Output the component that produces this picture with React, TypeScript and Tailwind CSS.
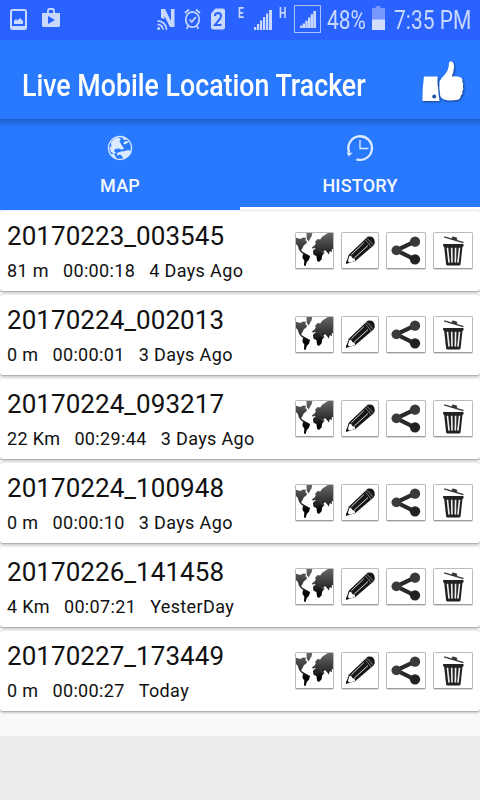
type Track = {
  name: string;
  distance: string;
  time: string;
  day: string;
};

const tracks: Track[] = [
  { name: "20170223_003545", distance: "81 m", time: "00:00:18", day: "4 Days Ago" },
  { name: "20170224_002013", distance: "0 m", time: "00:00:01", day: "3 Days Ago" },
  { name: "20170224_093217", distance: "22 Km", time: "00:29:44", day: "3 Days Ago" },
  { name: "20170224_100948", distance: "0 m", time: "00:00:10", day: "3 Days Ago" },
  { name: "20170226_141458", distance: "4 Km", time: "00:07:21", day: "YesterDay" },
  { name: "20170227_173449", distance: "0 m", time: "00:00:27", day: "Today" },
];

function SignalBars() {
  return (
    <svg width="18" height="21" viewBox="0 0 18 21" fill="#c9d8ff">
      <path d="M0 18h2.200v3H0zM3 15h2.200v6H3zM6 11.500h2.200V21H6zM9 8h2.200v13H9zM12 4.500h2.200V21H12zM15 1h3v20h-3z" />
    </svg>
  );
}

function StatusBar() {
  return (
    <div className="h-10 bg-[#2962ff] flex items-center text-[#c9d8ff]">
      <svg className="ml-2.5 -mt-0.5" width="17" height="21" viewBox="0 0 17 21">
        <rect x="1" y="1" width="15" height="19" rx="1.500" fill="none" stroke="#c9d8ff" strokeWidth="2" />
        <path d="M1 17h15v3H1zM4 15v-3l2-2 1.500 1.500L10 9l3 3v3z" fill="#c9d8ff" />
      </svg>
      <svg className="ml-[15px] -mt-1" width="18" height="20" viewBox="0 0 18 20">
        <path d="M6 5V2.500Q6 1 7.500 1h3Q12 1 12 2.500V5" fill="none" stroke="#c9d8ff" strokeWidth="1.800" />
        <path d="M0 5h18v12.500q0 1.500-1.500 1.500h-15Q0 19 0 17.500zM6 8v8l7-4z" fill="#c9d8ff" fillRule="evenodd" />
      </svg>

      {/* NFC */}
      <svg className="ml-[97px] -mt-0.5" width="18" height="23" viewBox="0 0 18 23">
        <path d="M4 10V1h4l6 12V1h3.500v18H13L7.500 8v3z" fill="#c9d8ff" />
        <g fill="none" stroke="#c9d8ff" strokeWidth="1.700">
          <path d="M0.500 12.800a9 9 0 0 1 9 9M0.500 16.300a5.500 5.500 0 0 1 5.500 5.500" />
        </g>
        <circle cx="1.700" cy="20.500" r="1.500" fill="#c9d8ff" />
      </svg>
      <svg className="ml-[9px] -mt-0.5" width="17" height="22" viewBox="0 0 17 22" fill="none" stroke="#c9d8ff" strokeWidth="1.700">
        <ellipse cx="8.500" cy="11.500" rx="6.700" ry="7.700" />
        <path d="M1 5l4-3.500M16 5l-4-3.500M4 18l-1.300 2.800M13 18l1.300 2.800M5.500 11.500l2.300 2.500 4-5" />
      </svg>
      <svg className="ml-[10px] -mt-0.5" width="14" height="22" viewBox="0 0 14 22">
        <path d="M4.500 0.500H12q2 0 2 2v17q0 2-2 2H2q-2 0-2-2v-14z" fill="#c9d8ff" />
        <path d="M4 8q0-3 3-3t3 3q0 2-2.500 4.500L4 17h6.500" fill="none" stroke="#2962ff" strokeWidth="2" />
      </svg>
      <span className="ml-[13px] -mt-3.5 w-[7px] text-[14px] leading-none font-bold">
        <span className="inline-block origin-left scale-x-[0.75]">E</span>
      </span>
      <div className="ml-[9px] -mt-0.5">
        <SignalBars />
      </div>
      <span className="ml-[7px] -mt-3.5 w-[8px] text-[14px] leading-none font-bold">
        <span className="inline-block origin-left scale-x-[0.75]">H</span>
      </span>
      <div className="ml-[7px] -mt-0.5 w-[27px] h-[28px] border border-[#a9c0ff] flex items-end justify-center pb-1">
        <svg width="16" height="17" viewBox="0 0 18 21" preserveAspectRatio="none" fill="#c9d8ff">
          <path d="M0 18h2.700v3H0zM3 15.500h2.700V21H3zM6 12h2.700v9H6zM9 8h2.700v13H9zM12 4h2.700v17H12zM15 0h3v21h-3z" />
        </svg>
      </div>
      <span className="ml-[6px] w-[40px] text-[25px] leading-none whitespace-nowrap">
        <span className="inline-block origin-left scale-x-[0.84]">48%</span>
      </span>
      <svg className="ml-[5px] -mt-1" width="13" height="24" viewBox="0 0 14 24" preserveAspectRatio="none">
        <path d="M4 0h5v2h5v12H0V2h4z" fill="#7998ff" />
        <path d="M0 13.500h14V24H0z" fill="#d3deff" />
      </svg>
      <span className="ml-[9px] w-[80px] text-[25px] leading-none whitespace-nowrap">
        <span className="inline-block origin-left scale-x-[0.84]">7:35 PM</span>
      </span>
    </div>
  );
}

function ThumbIcon() {
  return (
    <svg
      className="-mt-2 drop-shadow-[1px_1px_1px_rgba(0,0,0,0.45)]"
      width="43"
      height="42"
      viewBox="0 0 44 42"
      preserveAspectRatio="none"
    >
      <path
        d="M3 16.500h14q-.500 6 .500 12 .500 7 1.500 12.500H1.500q-.300-12 1.500-24.500z"
        fill="#fff"
      />
      <path
        d="M30.500 1.200q3.500.500 3.300 5.800-.300 5-2.300 9.500 5-.500 8.500.500 3 1 2.200 4.500 1.500 2 .600 4.500 1 2.500-.400 5 .500 3-1.600 4.500-.300 4-4.300 4.500-8 1-13-.500-3-1-3.800-3.500-1.500-8-.700-14.500 1-3 5-6.500 4.500-5 4.500-11 0-2.600 2-2.800z"
        fill="#fff"
      />
      <circle cx="13.500" cy="36.500" r="2" fill="#1f4fa0" />
    </svg>
  );
}

function GlobeIcon() {
  return (
    <svg width="26" height="26" viewBox="0 0 26 26">
      <circle cx="13" cy="13" r="11.500" fill="none" stroke="#dcebff" strokeWidth="1.300" />
      <path
        d="M4 8Q6 3.500 11 2.500l3 1.500-1.500 2L14 9l2 3 1 2-3 .500-2-1-4 .500-1 2 2 2-2 1-3-2-1.500-4 2-2zM15 2q3 0 5 2.500l-3 .500zM16 8l3-2 3 .500-1.500 1.500-3 1.500zM10 18l4-1.500 4-.500 3-1 3 1q-1 4-4.500 6.500L16 24l-1-3-2-1.500-3 1zM4 19h3l3 5q-3.500-.500-6-5z"
        fill="#dcebff"
      />
    </svg>
  );
}

function HistoryIcon() {
  return (
    <svg width="28" height="28" viewBox="0 0 28 28" fill="none" stroke="#dcebff">
      <path d="M3.200 18.500A11.800 11.800 0 1 1 10.500 25.300" strokeWidth="2.300" />
      <path d="M14 6v8.500h8.500" strokeWidth="1.300" />
      <path d="M.500 18.500l6 .300-3.700 3.700z" fill="#dcebff" stroke="none" />
    </svg>
  );
}

function Tabs() {
  return (
    <div className="h-[91px] flex bg-[#2979ff] bg-linear-to-b from-[#1d60ce] from-0% via-[#2979ff] via-10% to-[#2979ff] text-[#f4f8ff]">
      <button className="w-1/2 flex flex-col items-center pt-4">
        <GlobeIcon />
        <span className="mt-[11px] text-[18px] leading-7 font-medium tracking-[0.2px]">MAP</span>
      </button>
      <button className="w-1/2 flex flex-col items-center pt-[15px] border-b-3 border-white">
        <HistoryIcon />
        <span className="mt-[10px] text-[18px] leading-7 font-medium tracking-[0.2px]">HISTORY</span>
      </button>
    </div>
  );
}

function MapIcon() {
  return (
    <svg className="w-full h-full" viewBox="0 0 116 111" preserveAspectRatio="none">
      <defs>
        <linearGradient id="land" x1="0" y1="0" x2="0" y2="111" gradientUnits="userSpaceOnUse">
          <stop offset="0" stopColor="#666" />
          <stop offset="0.450" stopColor="#333" />
          <stop offset="0.700" stopColor="#050505" />
        </linearGradient>
      </defs>
      <g fill="url(#land)">
        <path d="M0 15l14 4 8-5 10 1-3 7 6 6-4 7-6 3-5 10-4 6 3 5 6 3 5 4-5 1-9-5-7-10-3-11-6-6z" />
        <path d="M33 0h18l-2 10-5 8-4 9-5-6-2-9z" />
        <path d="M22 66l8-1 14 8-3 11-7 8-4 13-5-2 1-15-6-10z" />
        <path d="M58 40l4-6-2-6 8-9 8 2 6-9 12-8 6-4h16v50l-4 3v8l-6-4-3 11-6-8-6-6-7 8-7-7-5-4-7 1-6-5-6 3-3-4z" />
        <path d="M53 57l7-8 14 2 9 10 7 1-8 10-2 12-8 8-6-4-2-15-9-4z" />
      </g>
    </svg>
  );
}

function PencilIcon() {
  return (
    <svg className="w-full h-full" viewBox="0 0 112 109" preserveAspectRatio="none">
      <path d="M12 96l9-28 53-51q4-6 9-6l10 1q6 3 8 10l1 9-3 7-58 50z" fill="#171717" />
      <path d="M70 20q12 8 21 24M75 15q13 9 22 23" fill="none" stroke="#bbb" strokeWidth="2" />
      <path d="M29 68l39-38M38 78l43-39" stroke="#ddd" strokeWidth="3" />
      <path d="M23 72l5-1 4 7 7 2 2 7-19 6-4-4z" fill="#fff" />
      <path d="M12 96l3-11 9 8z" fill="#111" />
    </svg>
  );
}

function ShareIcon() {
  return (
    <svg className="w-full h-full" viewBox="0 0 118 109" preserveAspectRatio="none">
      <path d="M86 27L29 54l57 28" fill="none" stroke="#2a2a2a" strokeWidth="13" />
      <circle cx="87" cy="27" r="16" fill="#3a3a3a" />
      <circle cx="29" cy="54" r="15" fill="#3a3a3a" />
      <circle cx="87" cy="82" r="16" fill="#222" />
    </svg>
  );
}

function TrashIcon() {
  return (
    <svg className="w-full h-full" viewBox="0 0 116 109" preserveAspectRatio="none">
      <path d="M31 12l59 18" stroke="#333" strokeWidth="4" />
      <path d="M54 18l3-6 12 3 1 8z" fill="#333" stroke="#333" strokeWidth="2" />
      <path d="M28 34l62 0v8l-3 1-6 55q-1 3-4 3H41q-3 0-4-3l-6-55-3-1z" fill="#222" />
      <path d="M41 46l5 46M54 46l1 46M66 46l-1 46M78 46l-5 46" stroke="#eee" strokeWidth="5" />
    </svg>
  );
}

const actionClass = "h-[37px] border border-[#bbb] border-b-[#999] rounded-[2px] bg-white shadow-[0_1px_1px_rgba(0,0,0,0.15)]";

function TrackCard({ track }: { track: Track }) {
  return (
    <div className="h-20 bg-white rounded-[3px] shadow-[0_1px_3px_rgba(0,0,0,0.45)] flex justify-between px-[7px]">
      <div className="text-[#111] whitespace-nowrap">
        <div className="mt-[9px] text-[26px] leading-8 tracking-[0.05px]">{track.name}</div>
        <div className="mt-[7px] flex gap-[14px] text-[18px] leading-6 tracking-[0.36px]">
          <span>{track.distance}</span>
          <span>{track.time}</span>
          <span>{track.day}</span>
        </div>
      </div>
      <div className="mt-[21px] flex items-start gap-[7px]">
        <button className={`w-[39px] ${actionClass}`}><MapIcon /></button>
        <button className={`w-[38px] ${actionClass}`}><PencilIcon /></button>
        <button className={`w-10 ${actionClass}`}><ShareIcon /></button>
        <button className={`w-10 ${actionClass}`}><TrashIcon /></button>
      </div>
    </div>
  );
}

export default function App() {
  return (
    <div className="w-[480px] h-[800px] overflow-hidden flex flex-col bg-[#ededed] font-['Roboto',sans-serif]">
      <StatusBar />
      <header className="h-[79px] bg-[#2979ff] flex items-center justify-between pl-[22px] pr-[16px] pt-[11px]">
        <h1 className="w-[350px] text-[32px] leading-10 font-medium text-white whitespace-nowrap">
          <span className="inline-block origin-left scale-x-[0.836]">Live Mobile Location Tracker</span>
        </h1>
        <ThumbIcon />
      </header>
      <Tabs />
      <main className="h-[526px] pt-px bg-[#fafafa] flex flex-col gap-1">
        {tracks.map((track) => (
          <TrackCard key={track.name} track={track} />
        ))}
      </main>
    </div>
  );
}
